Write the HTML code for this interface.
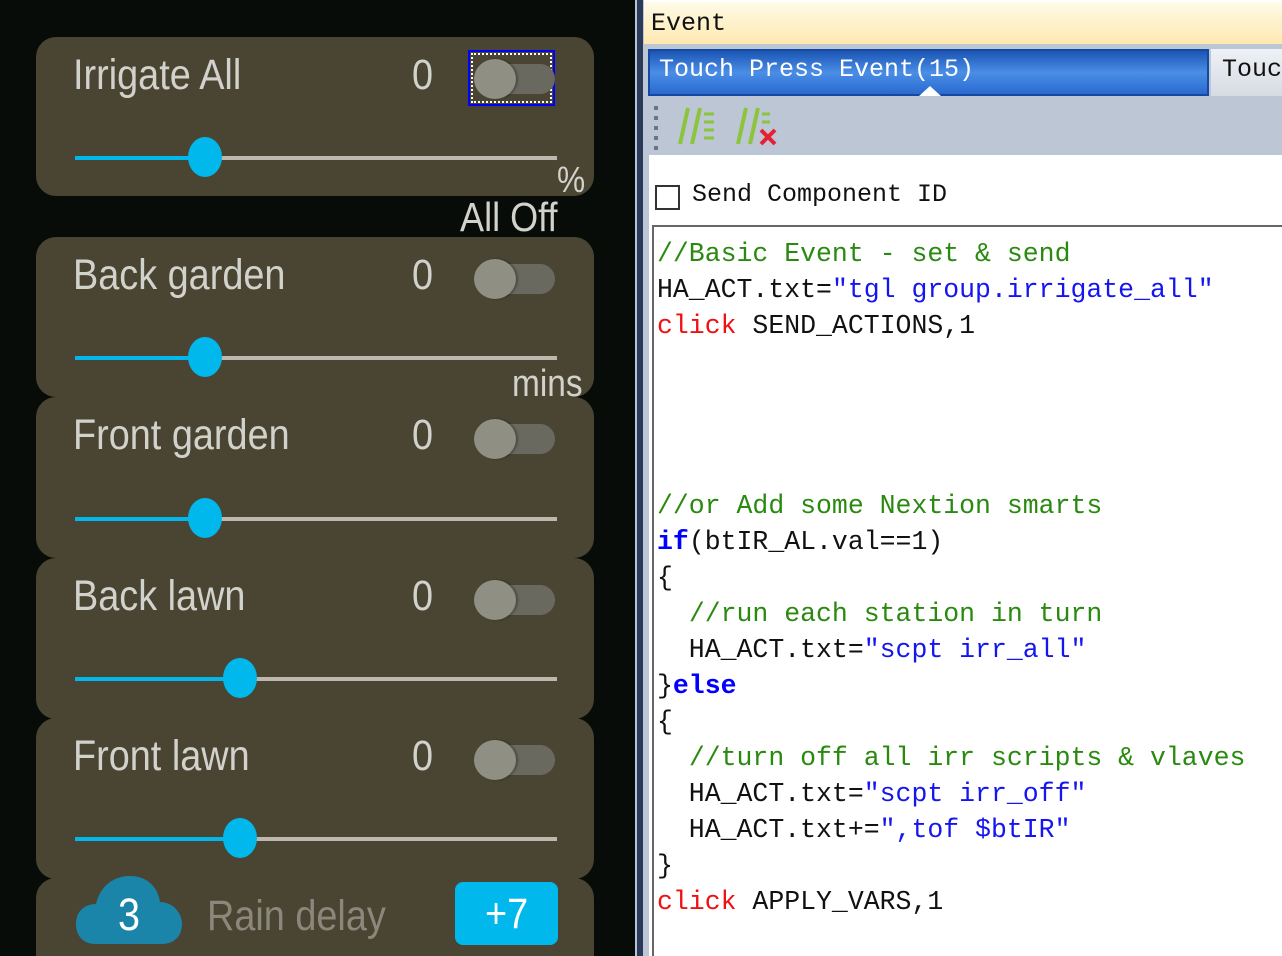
<!DOCTYPE html>
<html style="width:1282px;height:956px;overflow:hidden"><head><meta charset="utf-8"><style>
*{margin:0;padding:0;box-sizing:border-box}
body{width:1282px;height:956px;overflow:hidden;background:#080c09;position:relative;font-family:"Liberation Sans",sans-serif}
.a{position:absolute}
.card{position:absolute;left:36px;width:558px;background:#4a4532;border-radius:20px}
.t{position:absolute;color:#d2d2cc;font-family:"Liberation Sans Narrow","Liberation Sans",sans-serif;font-size:43px;line-height:40px;white-space:nowrap;transform:scaleX(0.88);transform-origin:0 0}
.tr{position:absolute;left:480px;width:75px;height:30px;border-radius:15px;background:#6a6960}
.kn{position:absolute;left:474px;width:42px;height:40px;border-radius:50%;background:#8f8f84;box-shadow:2px 0 2px rgba(0,0,0,.3)}
.ln{position:absolute;left:75px;width:482px;height:4px;background:#bdb8ad}
.lf{position:absolute;left:75px;height:4px;background:#00b8ec}
.sk{position:absolute;width:34px;height:40px;border-radius:50%;background:#00b8ec}
.code{position:absolute;left:657px;top:236px;font-family:"Liberation Mono",monospace;font-size:26.5px;line-height:36px;white-space:pre;color:#111}
.c{color:#2a8a10}.s{color:#1515f0}.k{color:#0000ff;font-weight:bold}.r{color:#f01010}
</style></head><body>
<div class="card" style="top:37px;height:159px"></div>
<div class="card" style="top:237px;height:160px"></div>
<div class="card" style="top:397px;height:161px"></div>
<div class="card" style="top:558px;height:161px"></div>
<div class="card" style="top:718px;height:161px"></div>
<div class="card" style="top:878px;height:78px;border-radius:20px 20px 0 0"></div>

<div class="t" style="left:73px;top:55px">Irrigate All</div>
<div class="t" style="left:73px;top:255px">Back garden</div>
<div class="t" style="left:73px;top:415px">Front garden</div>
<div class="t" style="left:73px;top:576px">Back lawn</div>
<div class="t" style="left:73px;top:736px">Front lawn</div>
<div class="t" style="left:412px;top:55px">0</div>
<div class="t" style="left:412px;top:255px">0</div>
<div class="t" style="left:412px;top:415px">0</div>
<div class="t" style="left:412px;top:576px">0</div>
<div class="t" style="left:412px;top:736px">0</div>

<div class="a" style="left:468px;top:50px;width:87px;height:56px;border:2px solid #0000ff"><div style="position:absolute;inset:1px;border:2px dotted #fff"></div></div>
<div class="tr" style="top:64px"></div><div class="kn" style="top:59px"></div>
<div class="tr" style="top:264px"></div><div class="kn" style="top:259px"></div>
<div class="tr" style="top:424px"></div><div class="kn" style="top:419px"></div>
<div class="tr" style="top:585px"></div><div class="kn" style="top:580px"></div>
<div class="tr" style="top:745px"></div><div class="kn" style="top:740px"></div>

<div class="ln" style="top:156px"></div><div class="lf" style="top:156px;width:130px"></div><div class="sk" style="left:188px;top:137px"></div>
<div class="ln" style="top:356px"></div><div class="lf" style="top:356px;width:130px"></div><div class="sk" style="left:188px;top:337px"></div>
<div class="ln" style="top:517px"></div><div class="lf" style="top:517px;width:130px"></div><div class="sk" style="left:188px;top:498px"></div>
<div class="ln" style="top:677px"></div><div class="lf" style="top:677px;width:165px"></div><div class="sk" style="left:223px;top:658px"></div>
<div class="ln" style="top:837px"></div><div class="lf" style="top:837px;width:165px"></div><div class="sk" style="left:223px;top:818px"></div>

<div class="t" style="left:557px;top:160px;font-size:36px">%</div>
<div class="t" style="left:460px;top:197px;font-size:41px">All Off</div>
<div class="t" style="left:512px;top:364px;font-size:38px">mins</div>

<svg class="a" style="left:74px;top:872px" width="110" height="74"><path d="M22 72 C6 72 2 60 2 52 C2 40 10 32 22 32 C26 14 40 4 56 4 C74 4 84 16 86 30 C98 30 108 40 108 52 C108 64 100 72 88 72 Z" fill="#1a85a8"/></svg>
<div class="t" style="left:118px;top:895px;color:#fff;font-size:45px">3</div>
<div class="t" style="left:207px;top:896px;color:#8a887c;font-size:43px">Rain delay</div>
<div class="a" style="left:455px;top:882px;width:103px;height:63px;background:#00b8ec;border-radius:8px"></div>
<div class="t" style="left:485px;top:894px;color:#fff;font-size:43px">+7</div>

<div class="a" style="left:635px;top:0;width:2px;height:956px;background:#b8c4d4"></div>
<div class="a" style="left:637px;top:0;width:6px;height:956px;background:#2b3a58"></div>
<div class="a" style="left:643px;top:0;width:639px;height:956px;background:#bcc6d4;overflow:hidden">
<div class="a" style="left:1px;top:0;width:638px;height:44px;background:linear-gradient(#fffbe8,#fde9b0);border-top:2px solid #fff"></div>
<div class="a" style="left:8px;top:9px;font-family:'Liberation Mono',monospace;font-size:25px;color:#111">Event</div>
<div class="a" style="left:5px;top:49px;width:561px;height:47px;background:linear-gradient(#1b55b5,#4a8ee6 50%,#2a6ad0);border:2px solid #1648a0"></div>
<div class="a" style="left:16px;top:55px;font-family:'Liberation Mono',monospace;font-size:25px;color:#fff">Touch Press Event(15)</div>
<div class="a" style="left:276px;top:86px;width:0;height:0;border-left:11px solid transparent;border-right:11px solid transparent;border-bottom:10px solid #fff"></div>
<div class="a" style="left:568px;top:49px;width:71px;height:47px;background:linear-gradient(#eef1f5,#d6dce4)"></div>
<div class="a" style="left:579px;top:55px;font-family:'Liberation Mono',monospace;font-size:25px;color:#111">Touch</div>
<svg class="a" style="left:7px;top:100px" width="140" height="55">
<g fill="#6a7488"><rect x="4" y="6" width="4" height="4"/><rect x="4" y="16" width="4" height="4"/><rect x="4" y="26" width="4" height="4"/><rect x="4" y="36" width="4" height="4"/><rect x="4" y="46" width="4" height="4"/></g>
<g stroke="#8cc43c" stroke-width="4"><path d="M30 44 L38 8 M42 44 L50 8"/><path d="M54 14h10M54 22h10M54 30h10M54 38h10" stroke-width="3"/>
<path d="M88 44 L96 8 M100 44 L108 8"/><path d="M112 14h8M112 22h8" stroke-width="3"/></g>
<path d="M111 30 L125 44 M125 30 L111 44" stroke="#e62030" stroke-width="4"/>
</svg>
<div class="a" style="left:6px;top:155px;width:633px;height:801px;background:#fff"></div>
<div class="a" style="left:12px;top:185px;width:25px;height:25px;border:2px solid #333;background:#fff"></div>
<div class="a" style="left:49px;top:180px;font-family:'Liberation Mono',monospace;font-size:25px;color:#111">Send Component ID</div>
<div class="a" style="left:9px;top:225px;width:640px;height:740px;border:2px solid #666;background:#fff"></div>
</div>
<div class="code"><span class="c">//Basic Event - set &amp; send</span>
HA_ACT.txt=<span class="s">"tgl group.irrigate_all"</span>
<span class="r">click</span> SEND_ACTIONS,1




<span class="c">//or Add some Nextion smarts</span>
<span class="k">if</span>(btIR_AL.val==1)
{
  <span class="c">//run each station in turn</span>
  HA_ACT.txt=<span class="s">"scpt irr_all"</span>
}<span class="k">else</span>
{
  <span class="c">//turn off all irr scripts &amp; vlaves</span>
  HA_ACT.txt=<span class="s">"scpt irr_off"</span>
  HA_ACT.txt+=<span class="s">",tof $btIR"</span>
}
<span class="r">click</span> APPLY_VARS,1</div>
</body></html>
